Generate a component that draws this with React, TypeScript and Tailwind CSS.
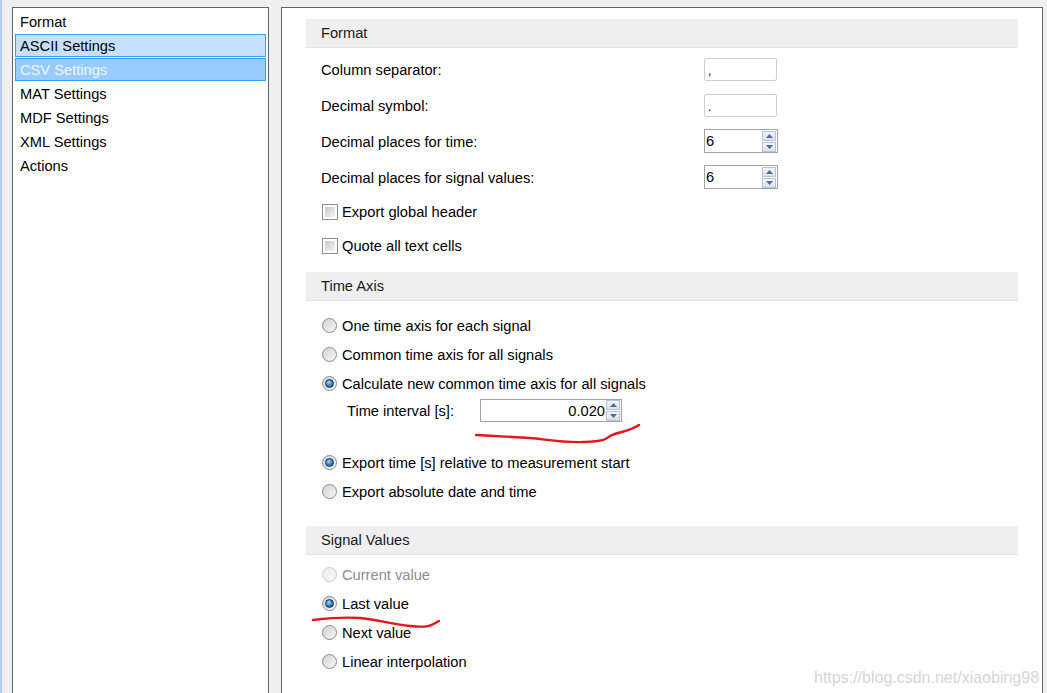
import React from 'react';

const navItems = ['Format', 'ASCII Settings', 'CSV Settings', 'MAT Settings', 'MDF Settings', 'XML Settings', 'Actions'];

const Radio = ({ checked = false, disabled = false }: { checked?: boolean; disabled?: boolean }) => (
  <span
    className={`w-[15px] h-[15px] shrink-0 rounded-full border flex items-center justify-center ${
      disabled
        ? 'border-[#c9c9c9] bg-linear-to-br from-[#ececec] to-[#fafafa]'
        : 'border-[#8a8a8a] bg-linear-to-br from-[#d2d2d2] to-[#f7f7f7]'
    }`}
  >
    {checked && (
      <span className="w-[9px] h-[9px] rounded-full border border-[#17314f] bg-[radial-gradient(circle_at_40%_35%,#9fd8f8,#2b7fc0_55%,#0d4a80)]" />
    )}
  </span>
);

const Checkbox = () => (
  <span className="w-[16px] h-[16px] shrink-0 border border-[#8e8e8e] bg-white p-[2px]">
    <span className="block w-full h-full bg-linear-to-br from-[#c9c9c9] to-[#f5f5f5]" />
  </span>
);

const Spinner = () => (
  <span className="flex flex-col gap-[1px] w-[14px]">
    <span className="h-[10px] border border-[#b7c2d2] bg-linear-to-b from-[#f2f5fa] to-[#d9e1ec] flex items-center justify-center">
      <svg width="7" height="4" viewBox="0 0 7 4">
        <path d="M0 4 L3.5 0 L7 4 Z" fill="#4f6a98" />
      </svg>
    </span>
    <span className="h-[10px] border border-[#b7c2d2] bg-linear-to-b from-[#f2f5fa] to-[#d9e1ec] flex items-center justify-center">
      <svg width="7" height="4" viewBox="0 0 7 4">
        <path d="M0 0 L7 0 L3.5 4 Z" fill="#4f6a98" />
      </svg>
    </span>
  </span>
);

const SectionHeader = ({ title }: { title: string }) => (
  <div className="h-[29px] bg-[#efefef] border-b border-[#e2e2e2] pl-[15px] flex items-center text-[#1a1a1a]">
    {title}
  </div>
);

const RadioRow = ({ label, checked, disabled }: { label: string; checked?: boolean; disabled?: boolean }) => (
  <div className="h-[29px] flex items-center gap-[5px] pl-[16px]">
    <Radio checked={checked} disabled={disabled} />
    <span className={disabled ? 'text-[#8d8d8d]' : 'text-black'}>{label}</span>
  </div>
);

const App = () => {
  return (
    <div className="relative w-[1047px] h-[693px] overflow-hidden bg-[#efefef] flex items-start font-['Liberation_Sans',Arial,sans-serif] text-[14.67px] text-black">
      <div className="w-[2px] h-full bg-[#b5d0ee]" />

      {/* Left navigation list */}
      <div className="ml-[10px] mt-[7px] w-[257px] h-[700px] border border-[#646464] bg-white pt-[2px] px-[2px] flex flex-col gap-[1px]">
        {navItems.map((item) => {
          const hover = item === 'ASCII Settings';
          const selected = item === 'CSV Settings';
          return (
            <div
              key={item}
              className={`h-[23px] pl-[4px] flex items-center border ${
                hover
                  ? 'bg-[#c5e1fd] border-[#3d9df3]'
                  : selected
                  ? 'bg-[#9acbfd] border-[#3d9df3] text-[#eef5fe]'
                  : 'border-transparent'
              }`}
            >
              {item}
            </div>
          );
        })}
      </div>

      {/* Settings panel */}
      <div className="ml-[12px] mt-[7px] w-[762px] h-[700px] border border-[#646464] bg-white pt-[11px] px-[24px]">
        <SectionHeader title="Format" />
        <div className="pt-[3px] pl-[15px]">
          {[
            { label: 'Column separator:', value: ',', spin: false },
            { label: 'Decimal symbol:', value: '.', spin: false },
            { label: 'Decimal places for time:', value: '6', spin: true },
            { label: 'Decimal places for signal values:', value: '6', spin: true },
          ].map((row) => (
            <div key={row.label} className="h-[36px] flex items-center">
              <span className="w-[383px] pt-[2px]">{row.label}</span>
              {row.spin ? (
                <div className="w-[74px] h-[24px] border border-[#a3a3a3] flex items-center justify-between pl-[1px] pr-[1px]">
                  <span>{row.value}</span>
                  <Spinner />
                </div>
              ) : (
                <div className="w-[73px] h-[23px] border border-[#cfcfcf] rounded-[2px] flex items-end pl-[3px] pb-[2px] text-[12px] leading-[14px]">
                  {row.value}
                </div>
              )}
            </div>
          ))}
          {['Export global header', 'Quote all text cells'].map((label) => (
            <div key={label} className="h-[34px] flex items-center gap-[4px] pl-[1px]">
              <Checkbox />
              <span>{label}</span>
            </div>
          ))}
        </div>

        <div className="mt-[9px]">
          <SectionHeader title="Time Axis" />
        </div>
        <div className="pt-[10px]">
          <RadioRow label="One time axis for each signal" />
          <RadioRow label="Common time axis for all signals" />
          <RadioRow label="Calculate new common time axis for all signals" checked />
          <div className="h-[25px] flex items-center pl-[41px]">
            <span className="w-[133px]">Time interval [s]:</span>
            <div className="w-[142px] h-[23px] border border-[#a3a3a3] flex items-center justify-end pr-[1px]">
              <span className="mr-[1px]">0.020</span>
              <Spinner />
            </div>
          </div>
          <div className="mt-[25px]">
            <RadioRow label="Export time [s] relative to measurement start" checked />
            <RadioRow label="Export absolute date and time" />
          </div>
        </div>

        <div className="mt-[20px]">
          <SectionHeader title="Signal Values" />
        </div>
        <div className="pt-[5px]">
          <RadioRow label="Current value" disabled />
          <RadioRow label="Last value" checked />
          <RadioRow label="Next value" />
          <RadioRow label="Linear interpolation" />
        </div>
      </div>

      {/* Hand-drawn annotations */}
      <svg className="absolute inset-0 pointer-events-none" width="1047" height="693" viewBox="0 0 1047 693">
        <path
          d="M476 435 C 495 436, 515 437, 530 438 S 560 443, 585 442 S 605 438, 612 435 S 630 431, 639 425"
          fill="none"
          stroke="#e8141c"
          strokeWidth="2.4"
          strokeLinecap="round"
        />
        <path
          d="M313 620 C 330 618, 345 617, 360 618 S 390 624, 410 626 S 432 625, 439 621"
          fill="none"
          stroke="#e8141c"
          strokeWidth="2.4"
          strokeLinecap="round"
        />
      </svg>

      <div className="absolute left-[814px] top-[666px] text-[16px] text-[#d6d6d6] whitespace-nowrap">
        https://blog.csdn.net/xiaobing98
      </div>
    </div>
  );
};

export default App;
